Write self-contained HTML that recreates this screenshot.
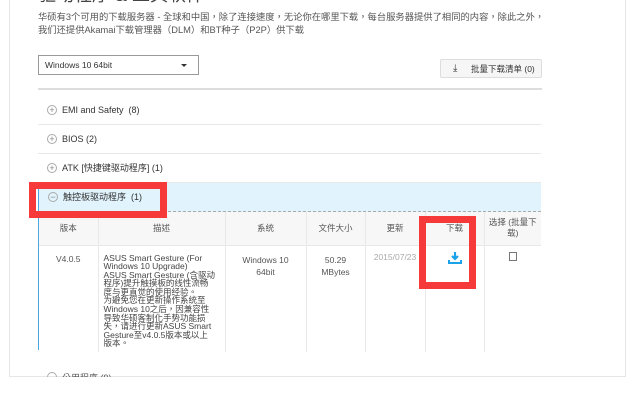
<!DOCTYPE html><html><head><meta charset="utf-8"><style>
*{margin:0;padding:0;box-sizing:border-box}
body{width:641px;height:401px;background:#fff;font-family:"Liberation Sans","Noto Sans CJK TC",sans-serif;color:#333;position:relative;overflow:hidden;font-size:8.5px}
.a{position:absolute}
.panel{left:9px;top:-2px;width:617px;height:379px;border:1px solid #e6e6e6;border-top:none}
.row{left:38px;width:503px;height:29px;border-bottom:1px solid #e8e8e8;font-size:9px;line-height:29px;padding-left:24px}
.pl{position:absolute;left:9px;top:9px;width:10px;height:10px;border:1px solid #aaa;border-radius:50%;font-size:9px;line-height:8px;text-align:center;color:#888}
td{border-right:1px solid #e8e8e8;text-align:center;vertical-align:top;font-size:8.5px}
</style></head><body>
<div class="a panel"></div>
<div class="a" style="left:38px;top:-19px;font-size:18px;color:#444">驱动程序 & 工具软件</div>
<div class="a" style="left:38px;top:11px;width:508px;font-size:9.3px;line-height:13px;color:#555">华硕有3个可用的下载服务器 - 全球和中国，除了连接速度，无论你在哪里下载，每台服务器提供了相同的内容，除此之外，我们还提供Akamai下载管理器（DLM）和BT种子（P2P）供下载</div>
<div class="a" style="left:38px;top:55px;width:161px;height:20px;border:1px solid #999;font-size:8.5px;line-height:19px;padding-left:6px">Windows 10 64bit<span style="position:absolute;left:142px;top:8px;border:3px solid transparent;border-top:3px solid #333"></span></div>
<div class="a" style="left:440px;top:59px;width:102px;height:19px;border:1px solid #ddd;border-radius:2px;background:#f6f6f6;font-size:8.5px;line-height:18px;padding-left:30px">批量下载清单 (0)<span style="position:absolute;left:12px;top:4px;font-size:10px;line-height:10px">⤓</span></div>
<div class="a" style="left:38px;top:88px;width:504px;height:2px;background:#ddd"></div>
<div class="a row" style="top:96px"><span class="pl">+</span>EMI and Safety &nbsp;(8)</div>
<div class="a row" style="top:125px"><span class="pl">+</span>BIOS (2)</div>
<div class="a row" style="top:154px"><span class="pl">+</span>ATK [快捷键驱动程序] (1)</div>
<div class="a row" style="top:183px;background:#e1f3fc;border-left:1px solid #4aa8e0;border-bottom:1px dashed #aaa;height:29px"><span class="pl">−</span>触控板驱动程序 &nbsp;(1)</div>
<div class="a" style="left:38px;top:212px;width:1px;height:138px;background:#4aa8e0"></div>
<table class="a" style="left:39px;top:212px;width:502px;border-collapse:collapse;color:#555">
<tr style="background:#f7f7f7;height:33px;border-bottom:1px solid #e8e8e8"><td style="width:59px;padding-top:10px">版本</td><td style="width:127px;padding-top:10px">描述</td><td style="width:81px;padding-top:10px">系统</td><td style="width:59px;padding-top:10px">文件大小</td><td style="width:60px;padding-top:10px">更新</td><td style="width:59px;padding-top:10px">下载</td><td style="border:none;padding-top:5px;line-height:11px">选择 (批量下载)</td></tr>
<tr style="height:105px"><td style="padding-top:8px">V4.0.5</td><td style="text-align:left;padding:8px 4px 4px 5px;color:#444"><div style="width:112px;line-height:8.6px;font-size:8.5px">ASUS Smart Gesture (For Windows 10 Upgrade)<br>ASUS Smart Gesture (含驱动程序)提升触摸板的线性流畅度与更直觉的使用经验。<br>为避免您在更新操作系统至Windows 10之后，因兼容性导致华硕客制化手势功能损失，请进行更新ASUS Smart Gesture至v4.0.5版本或以上版本。</div></td><td style="padding-top:8px;line-height:12px">Windows 10<br>64bit</td><td style="padding-top:8px;line-height:12px">50.29<br>MBytes</td><td style="padding-top:6px;color:#aaa">2015/07/23</td><td style="padding-top:5px"><svg width="14" height="14" viewBox="0 0 14 14"><path d="M7 1v7M4 5l3 3 3-3" stroke="#1aa3e8" stroke-width="2.2" fill="none"/><path d="M1 9v3h12V9" stroke="#1aa3e8" stroke-width="2" fill="none"/></svg></td><td style="border:none;padding-top:6px"><span style="display:inline-block;width:8px;height:9px;border:1px solid #777"></span></td></tr>
</table>
<div class="a" style="left:29px;top:182px;width:138px;height:36px;border:7px solid #f63a3a"></div>
<div class="a" style="left:419px;top:216px;width:57px;height:73px;border:7px solid #f63a3a"></div>
<div class="a" style="left:47px;top:372px;width:10px;height:10px;border:1px solid #aaa;border-radius:50%"></div>
<div class="a" style="left:62px;top:371px;font-size:9px;color:#555">公用程序 (9)</div>
<div class="a" style="left:0;top:377px;width:641px;height:24px;background:#fff"></div>
</body></html>
